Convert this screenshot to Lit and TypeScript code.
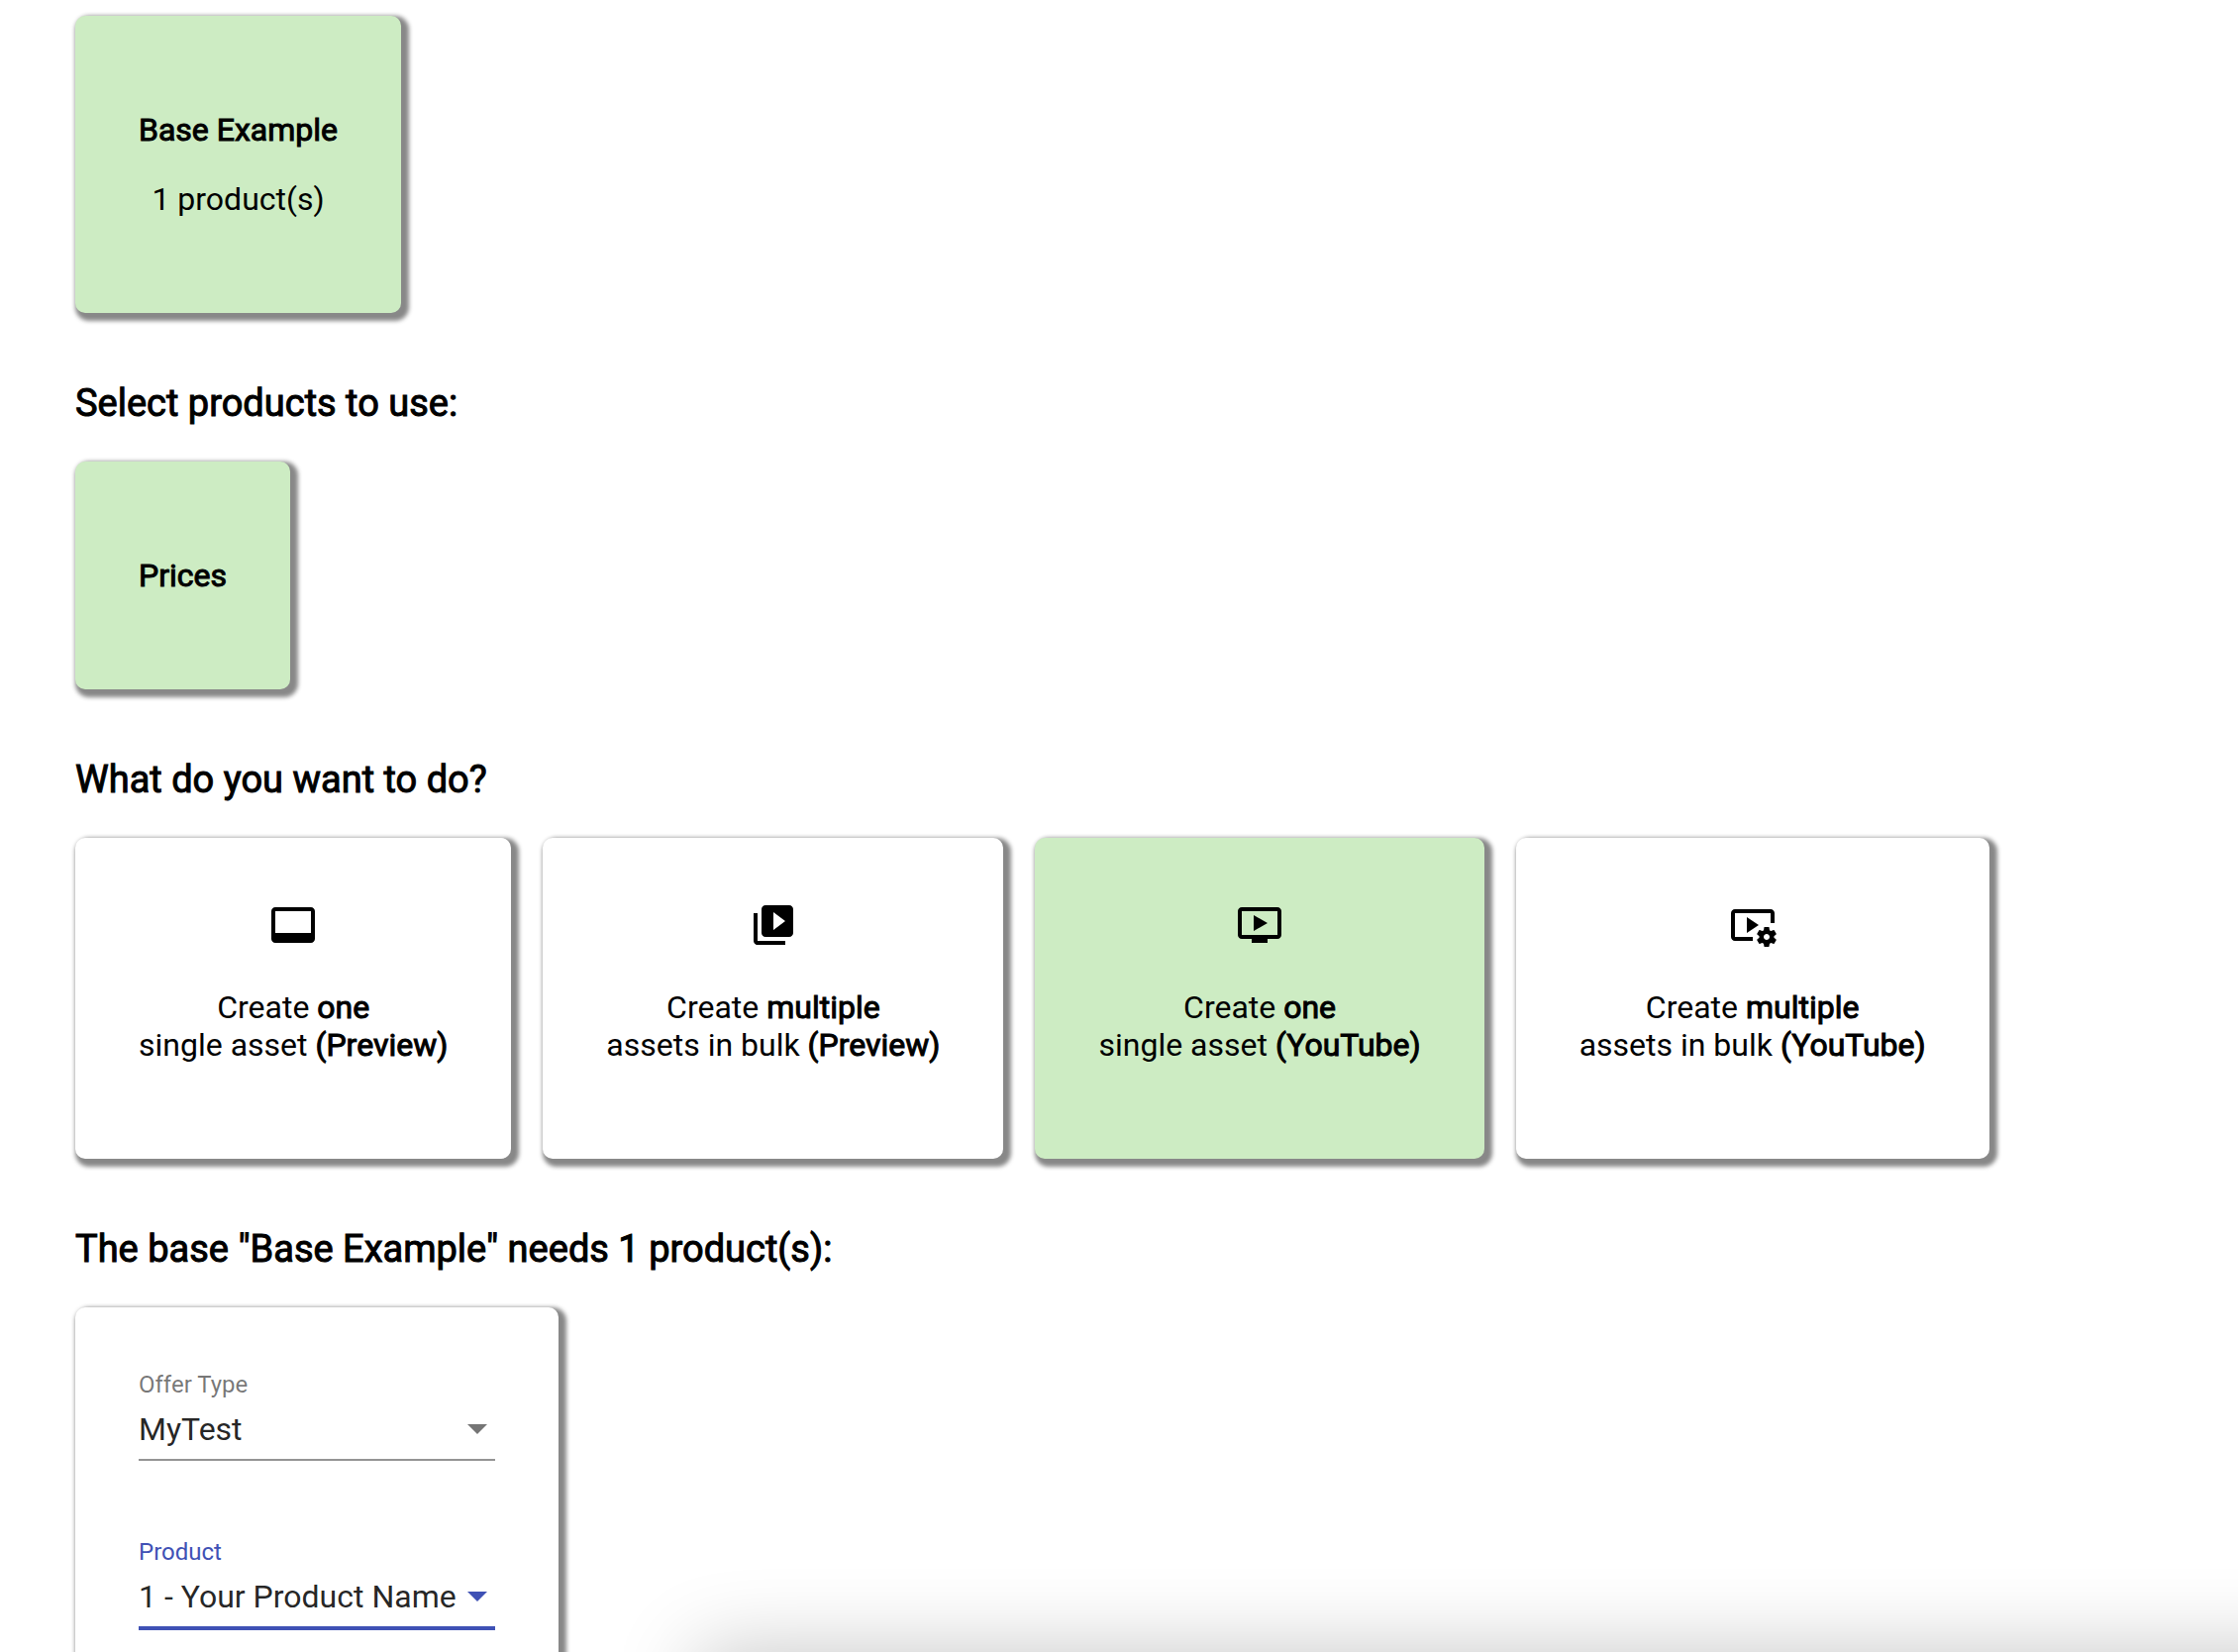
import { LitElement, html, css, svg } from "lit";
import { customElement, property, state } from "lit/decorators.js";
import { classMap } from "lit/directives/class-map.js";

const ICONS = {
  videoLabel: svg`<path d="M21 3H3c-1.1 0-2 .9-2 2v14c0 1.1.9 2 2 2h18c1.1 0 2-.9 2-2V5c0-1.1-.9-2-2-2zm0 13H3V5h18v11z"/>`,
  videoLibrary: svg`<path d="M4 6H2v14c0 1.1.9 2 2 2h14v-2H4V6zm16-4H8c-1.1 0-2 .9-2 2v12c0 1.1.9 2 2 2h12c1.1 0 2-.9 2-2V4c0-1.1-.9-2-2-2zm-8 12.500v-9l6 4.500-6 4.500z"/>`,
  ondemandVideo: svg`<path d="M21 3H3c-1.110 0-2 .890-2 2v12c0 1.100.890 2 2 2h5v2h8v-2h5c1.100 0 1.990-.900 1.990-2L23 5c0-1.110-.900-2-2-2zm0 14H3V5h18v12zm-5-6l-7 4V7z"/>`,
  videoSettings: svg`<path d="M3 6h18v5h2V6c0-1.100-.900-2-2-2H3c-1.100 0-2 .900-2 2v12c0 1.100.900 2 2 2h9v-2H3V6z"/><path d="M15 12L9 8v8z"/><path d="M22.710 18.430c.030-.290.040-.580.010-.860l1.070-.850c.100-.080.120-.210.060-.320l-1.030-1.790c-.060-.110-.190-.150-.310-.110l-1.280.500c-.230-.170-.480-.310-.750-.420l-.200-1.360c-.010-.130-.120-.220-.240-.220h-2.070c-.120 0-.230.090-.250.210l-.200 1.360c-.260.110-.510.260-.740.420l-1.280-.500c-.120-.050-.250 0-.310.110l-1.030 1.790c-.060.110-.040.240.060.320l1.070.860c-.030.290-.040.580-.010.860l-1.070.850c-.100.080-.120.210-.060.320l1.030 1.790c.060.110.190.150.310.110l1.270-.500c.230.170.480.310.750.420l.200 1.360c.020.120.120.210.250.210h2.070c.120 0 .230-.090.250-.210l.200-1.360c.260-.110.510-.260.740-.420l1.280.500c.120.050.250 0 .310-.110l1.030-1.790c.060-.110.040-.240-.060-.320l-1.070-.850zM19 19.500c-.830 0-1.500-.670-1.500-1.500s.670-1.500 1.500-1.500 1.500.670 1.500 1.500-.670 1.500-1.500 1.500z"/>`,
};

const ACTIONS = [
  { id: "one-preview", icon: ICONS.videoLabel, count: "one", what: "single asset", target: "(Preview)" },
  { id: "bulk-preview", icon: ICONS.videoLibrary, count: "multiple", what: "assets in bulk", target: "(Preview)" },
  { id: "one-youtube", icon: ICONS.ondemandVideo, count: "one", what: "single asset", target: "(YouTube)" },
  { id: "bulk-youtube", icon: ICONS.videoSettings, count: "multiple", what: "assets in bulk", target: "(YouTube)" },
];

@customElement("select-field")
export class SelectField extends LitElement {
  @property() label = "";
  @property({ type: Array }) options: string[] = [];
  @property({ type: Boolean }) active = false;

  static styles = css`
    :host {
      display: block;
    }
    .field {
      display: flex;
      flex-direction: column;
      color: rgba(0, 0, 0, 0.54);
    }
    .label {
      font-size: 24px;
      line-height: 28px;
    }
    .control {
      display: grid;
      grid-template-columns: 1fr 36px;
      align-items: center;
      padding: 12px 0 11px;
      height: 38px;
      border-bottom: 2px solid rgba(0, 0, 0, 0.42);
    }
    .select {
      grid-area: 1 / 1 / 2 / 3;
      appearance: none;
      width: 100%;
      height: 38px;
      margin: 0;
      padding: 0 36px 0 0;
      border: 0;
      outline: 0;
      background: transparent;
      color: rgba(0, 0, 0, 0.87);
      font: inherit;
      line-height: 38px;
    }
    .arrow {
      grid-area: 1 / 2 / 2 / 3;
      justify-self: end;
      margin-right: 8px;
      border: 10px solid transparent;
      border-top-color: currentColor;
      border-bottom: 0;
      pointer-events: none;
    }
    .active {
      color: #3f51b5;
    }
    .active .control {
      border-bottom: 4px solid #3f51b5;
    }
  `;

  render() {
    return html`
      <div class=${classMap({ field: true, active: this.active })}>
        <label class="label" for="control">${this.label}</label>
        <div class="control">
          <select class="select" id="control">
            ${this.options.map((o) => html`<option>${o}</option>`)}
          </select>
          <span class="arrow"></span>
        </div>
      </div>
    `;
  }
}

@customElement("app-root")
export class AppRoot extends LitElement {
  @state() private action = "one-youtube";

  static styles = css`
    :host {
      display: block;
      background: #fff;
      color: #000;
      font-family: Roboto, "Liberation Sans", sans-serif;
      font-size: 32px;
      line-height: 38px;
    }
    .page {
      box-sizing: border-box;
      height: 100vh;
      overflow: hidden;
      padding: 16px 76px 0;
    }
    .heading {
      margin: 69px 0 37px;
      font-size: 38px;
      line-height: 44px;
      font-weight: 400;
      -webkit-text-stroke: 1px currentColor;
    }
    .row {
      display: flex;
      align-items: flex-start;
      gap: 32px;
    }
    .card {
      display: flex;
      flex-direction: column;
      align-items: center;
      gap: 32px;
      margin: 0;
      padding: 96px 64px;
      border: 0;
      border-radius: 10px;
      background: #fff;
      box-shadow: 4px 4px 4px 4px #888;
      color: inherit;
      font: inherit;
      text-align: center;
      white-space: nowrap;
    }
    .selected {
      background: #cdecc3;
    }
    .action {
      gap: 40px;
      padding-top: 64px;
    }
    .icon {
      width: 48px;
      height: 48px;
      fill: currentColor;
    }
    .strong {
      -webkit-text-stroke: 1px currentColor;
    }
    .form {
      align-items: stretch;
      gap: 78px;
      padding: 64px;
      text-align: left;
    }
    .field {
      width: 360px;
    }
    .sheet {
      position: fixed;
      top: 100%;
      left: 704px;
      right: -100px;
      height: 100px;
      box-shadow: 0 0 84px rgba(0, 0, 0, 0.23);
    }
  `;

  render() {
    return html`
      <main class="page">
        <div class="row">
          <button class="card selected" type="button">
            <span class="strong">Base Example</span>
            <span>1 product(s)</span>
          </button>
        </div>

        <h3 class="heading">Select products to use:</h3>
        <div class="row">
          <button class="card selected" type="button">
            <span class="strong">Prices</span>
          </button>
        </div>

        <h3 class="heading">What do you want to do?</h3>
        <div class="row">
          ${ACTIONS.map(
            (a) => html`
              <button
                type="button"
                class=${classMap({ card: true, action: true, selected: a.id === this.action })}
                @click=${() => (this.action = a.id)}
              >
                <svg class="icon" viewBox="0 0 24 24" aria-hidden="true">${a.icon}</svg>
                <span>
                  Create <span class="strong">${a.count}</span><br />
                  ${a.what} <span class="strong">${a.target}</span>
                </span>
              </button>
            `,
          )}
        </div>

        <h3 class="heading">The base "Base Example" needs 1 product(s):</h3>
        <div class="row">
          <div class="card form">
            <select-field class="field" label="Offer Type" .options=${["MyTest"]}></select-field>
            <select-field class="field" label="Product" .options=${["1 - Your Product Name"]} active></select-field>
          </div>
        </div>
      </main>
      <div class="sheet"></div>
    `;
  }
}
